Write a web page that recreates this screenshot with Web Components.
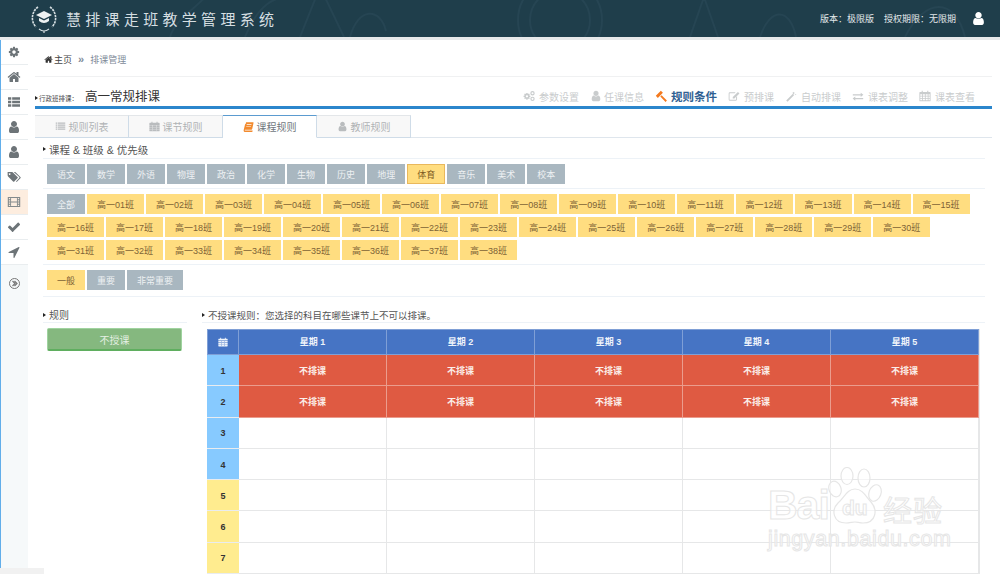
<!DOCTYPE html>
<html lang="zh">
<head>
<meta charset="utf-8">
<title>慧排课走班教学管理系统</title>
<style>
  html, body { margin: 0; height: 574px; overflow: hidden; background: #fff; }
  body { font-family: "Liberation Sans", "Noto Sans CJK SC", sans-serif; font-size: 9px; color: #555; position: relative; }
  .shell { display: flex; height: 534px; }
  .content { flex: 1; min-width: 0; }
  .rules { display: flex; }
</style>
</head>
<body>
<app-header></app-header>
<div class="shell">
  <side-nav></side-nav>
  <main-panel class="content">
    <bread-crumb></bread-crumb>
    <step-bar></step-bar>
    <tab-bar></tab-bar>
    <section-title>课程 &amp; 班级 &amp; 优先级</section-title>
    <chip-row id="subjects"></chip-row>
    <chip-row id="classes"></chip-row>
    <chip-row id="levels" last></chip-row>
    <div class="rules">
      <rule-panel style="width:144px;margin-right:7px">
        <span slot="title">规则</span>
        <rule-button>不授课</rule-button>
      </rule-panel>
      <rule-panel style="width:783px">
        <span slot="title" style="font-size:9.5px">不授课规则：您选择的科目在哪些课节上不可以排课。</span>
        <time-table></time-table>
      </rule-panel>
    </div>
  </main-panel>
</div>
<jingyan-mark></jingyan-mark>

<script>
const ICONS = {
  cog: '<path d="M1152 896q0-106-75-181t-181-75-181 75-75 181 75 181 181 75 181-75 75-181zm512-109v222q0 12-8 23t-20 13l-185 28q-19 54-39 91 35 50 107 138 10 12 10 25t-9 23q-27 37-99 108t-94 71q-12 0-26-9l-138-108q-44 23-91 38-16 136-29 186-7 28-36 28h-222q-14 0-24.5-8.5t-11.5-21.5l-28-184q-49-16-90-37l-141 107q-10 9-25 9-14 0-25-11-126-114-165-168-7-10-7-23 0-12 8-23 15-21 51-66.5t54-70.5q-27-50-41-99l-183-27q-13-2-21-12.5t-8-23.5v-222q0-12 8-23t19-13l186-28q14-46 39-92-40-57-107-138-10-12-10-24 0-10 9-23 26-36 98.5-107.5t94.5-71.5q13 0 26 10l138 107q44-23 91-38 16-136 29-186 7-28 36-28h222q14 0 24.5 8.5t11.5 21.5l28 184q49 16 90 37l142-107q9-9 24-9 13 0 25 10 129 119 165 170 7 8 7 22 0 12-8 23-15 21-51 66.5t-54 70.5q26 50 41 98l183 28q13 2 21 12.5t8 23.5z"/>',
  home: '<path d="M1472 992v480q0 26-19 45t-45 19h-384v-384h-256v384h-384q-26 0-45-19t-19-45v-480q0-1 .5-3t.5-3l575-474 575 474q1 2 1 6zm223-69l-62 74q-8 9-21 11h-3q-13 0-21-7l-692-577-692 577q-12 8-24 7-13-2-21-11l-62-74q-8-10-7-23.5t11-21.5l719-599q32-26 76-26t76 26l244 204v-195q0-14 9-23t23-9h192q14 0 23 9t9 23v408l219 182q10 8 11 21.5t-7 23.5z"/>',
  user: '<path d="M1536 1399q0 109-62.5 187t-150.5 78h-854q-88 0-150.5-78t-62.5-187q0-85 8.5-160.5t31.5-152 58.5-131 94-89 134.5-34.5q131 128 313 128t313-128q76 0 134.5 34.5t94 89 58.5 131 31.5 152 8.5 160.5zm-256-887q0 159-112.5 271.5t-271.5 112.5-271.5-112.5-112.5-271.5 112.5-271.5 271.5-112.5 271.5 112.5 112.5 271.5z"/>',
  check: '<path d="M1671 566q0 40-28 68l-724 724-136 136q-28 28-68 28t-68-28l-136-136-362-362q-28-28-28-68t28-68l136-136q28-28 68-28t68 28l294 295 656-657q28-28 68-28t68 28l136 136q28 28 28 68z"/>',
  send: '<path d="M1593 349l-640 1280q-17 35-57 35-5 0-15-2-22-5-35.5-22.5t-13.5-39.5v-576h-576q-22 0-39.5-13.5t-22.5-35.5 4-42 29-30l1280-640q13-7 29-7 27 0 45 19 15 14 18.5 34.5t-6.5 39.5z"/>',
  list: '<path d="M128 300h420v320H128zM660 300h1004v320H660zM128 736h420v320H128zM660 736h1004v320H660zM128 1172h420v320H128zM660 1172h1004v320H660z"/>',
  lines: '<path d="M120 230h260v220H120zM480 230h1190v220H480zM120 560h260v220H120zM480 560h1190v220H480zM120 890h260v220H120zM480 890h1190v220H480zM120 1220h260v220H120zM480 1220h1190v220H480z"/>',
  tags: '<path fill-rule="evenodd" d="M80 250h560q50 0 90 40l640 640q40 45 0 90l-470 470q-45 40-90 0L170 850q-90-70-90-170zM340 400a110 110 0 1 0 1 0z"/><path d="M860 250h150q50 0 90 40l640 640q40 45 0 90l-470 470q-40 30-90 10l-40-40 430-430q50-60 0-120z"/>',
  film: '<path fill-rule="evenodd" d="M100 260h1592v1272H100zM240 380v170h170V380zM240 660v170h170V660zM240 960v170h170V960zM240 1240v170h170v-170zM1382 380v170h170V380zM1382 660v170h170V660zM1382 960v170h170V960zM1382 1240v170h170v-170zM520 380v460h752V380zM520 950v460h752V950z"/>',
  calendar: '<path fill-rule="evenodd" d="M400 130h160v170h670V130h160v170h250q90 0 90 90v1200q0 90-90 90H150q-90 0-90-90V390q0-90 90-90h250zM190 620v240h270V620zM580 620v240h300V620zM1000 620v240h300V620zM1420 620v240h190V620zM190 960v240h270V960zM580 960v240h300V960zM1000 960v240h300V960zM1420 960v240h190V960zM190 1300v220h270v-220zM580 1300v220h300v-220zM1000 1300v220h300v-220zM1420 1300v220h190v-220z"/>',
  cogs: '<g transform="translate(0 350) scale(.66)"><path d="M1152 896q0-106-75-181t-181-75-181 75-75 181 75 181 181 75 181-75 75-181zm512-109v222q0 12-8 23t-20 13l-185 28q-19 54-39 91 35 50 107 138 10 12 10 25t-9 23q-27 37-99 108t-94 71q-12 0-26-9l-138-108q-44 23-91 38-16 136-29 186-7 28-36 28h-222q-14 0-24.5-8.5t-11.5-21.5l-28-184q-49-16-90-37l-141 107q-10 9-25 9-14 0-25-11-126-114-165-168-7-10-7-23 0-12 8-23 15-21 51-66.5t54-70.5q-27-50-41-99l-183-27q-13-2-21-12.5t-8-23.5v-222q0-12 8-23t19-13l186-28q14-46 39-92-40-57-107-138-10-12-10-24 0-10 9-23 26-36 98.5-107.5t94.5-71.5q13 0 26 10l138 107q44-23 91-38 16-136 29-186 7-28 36-28h222q14 0 24.5 8.5t11.5 21.5l28 184q49 16 90 37l142-107q9-9 24-9 13 0 25 10 129 119 165 170 7 8 7 22 0 12-8 23-15 21-51 66.5t-54 70.5q26 50 41 98l183 28q13 2 21 12.5t8 23.5z"/></g><circle cx="1420" cy="480" r="240" fill="none" stroke="currentColor" stroke-width="170"/><circle cx="1420" cy="1320" r="240" fill="none" stroke="currentColor" stroke-width="170"/>',
  gavel: '<path d="M109 809L809 109l282 282-700 700zM912 728l730 730-184 184-730-730z"/>',
  edit: '<path fill-rule="evenodd" d="M260 330h880l-140 140H280q-50 0-50 50v880q0 50 50 50h880q50 0 50-50v-360l140-140v520q0 170-170 170H280q-180 0-180-180V510q0-180 160-180z"/><path d="M1480 290l230 230-760 760H710v-240z"/>',
  magic: '<path d="M1180 560l200 200-1000 1000-200-200zM1280 250l60 120 130 30-100 90 20 130-110-70-120 70 20-130-90-90 130-30zM1600 560l40 90 90 30-90 30-40 90-40-90-90-30 90-30z"/>',
  exchange: '<path d="M120 620h1180V400l400 320-400 320V820H120zM1672 1180H492V960l-400 320 400 320v-220h1180z"/>',
  book: '<path d="M480 200h1180q80 0 60 100l-220 1000q-20 110-140 110H340q-70 0-70 70t90 80h1120q50 0 90-40l-30 180q-20 90-120 90H330q-230 0-230-250 0-80 30-170l180-720q40-250 170-250zM620 500l-30 110h780l30-110zM540 800l-30 110h780l30-110z" fill-rule="evenodd"/>',
  calendarFill: '<path fill-rule="evenodd" d="M400 130h160v170h670V130h160v170h250q90 0 90 90v1200q0 90-90 90H150q-90 0-90-90V390q0-90 90-90h250zM60 640v60h1670v-60zM60 1000v60h1670v-60zM60 1340v60h1670v-60zM560 700v900h60V700zM1170 700v900h60V700z"/>'
};

class UiIcon extends HTMLElement {
  connectedCallback() {
    const size = this.getAttribute('size') || 12;
    this.attachShadow({ mode: 'open' }).innerHTML = `
      <style>:host { display: inline-flex; flex: none; } svg { display: block; fill: currentColor; }</style>
      <svg width="${size}" height="${size}" viewBox="0 0 1792 1792" aria-hidden="true">${ICONS[this.getAttribute('name')]}</svg>`;
  }
}
customElements.define('ui-icon', UiIcon);

class AppHeader extends HTMLElement {
  constructor() {
    super();
    this.attachShadow({ mode: 'open' }).innerHTML = `
      <style>
        :host { display: flex; align-items: center; height: 37px; border-bottom: 3px solid #e7e9ea; background: #1f3e4b; color: #d6dfe2; position: relative; overflow: hidden; }
        .bg { position: absolute; inset: 0; pointer-events: none; }
        .logo { margin-left: 31px; display: block; position: relative; }
        .name { margin-left: 9px; font-size: 15px; letter-spacing: 4.3px; white-space: nowrap; position: relative; }
        .info { margin-left: auto; display: flex; align-items: center; font-size: 9px; color: #e2e8ea; position: relative; }
        .info span + span { margin-left: 10px; }
        ui-icon { margin: 0 14px 0 15px; color: #fff; }
      </style>
      <svg class="bg" width="1000" height="37" fill="none" stroke="#264553" stroke-width="2">
        <circle cx="560" cy="20" r="42"/><circle cx="560" cy="20" r="30"/>
        <path d="M690 37l14-40 14 40M760 37c10-30 30-30 36 0"/>
        <path d="M300 37l20-50 24 50M350 37c8-30 30-30 36-6M905 37c20-40 50-40 60 0"/>
        <path d="M170 37c6-20 30-30 44-50M245 37c14-34 30-40 44-40"/>
      </svg>
      <svg class="logo" width="26" height="32" viewBox="0 0 26 32">
        <path d="M7 4C1 8-1 18 5 24M19 4c6 4 8 14 2 20" fill="none" stroke="#d6dfe2" stroke-width="1.6" stroke-dasharray="2.4 .8"/>
        <path d="M8 26q5 4 10 0M13 28v2" fill="none" stroke="#d6dfe2" stroke-width="1.2"/>
        <path d="M13 8l8 4-8 4-8-4z" fill="#eef2f3"/>
        <path d="M8 15l5 2.6 5-2.6v3q-5 4-10 0z" fill="#eef2f3"/>
      </svg>
      <div class="name">慧排课走班教学管理系统</div>
      <div class="info"><span>版本：极限版</span><span>授权期限：无限期</span><ui-icon name="user" size="15"></ui-icon></div>`;
  }
}
customElements.define('app-header', AppHeader);

class SideNav extends HTMLElement {
  constructor() {
    super();
    const items = ['cog', 'home', 'list', 'user', 'user', 'tags', 'film', 'check', 'send'];
    const rows = items.map((n, i) =>
      `<div class="item${i === 6 ? ' on' : ''}"><ui-icon name="${n}" size="${n === 'cog' ? 12 : 14}"></ui-icon></div>`).join('');
    this.attachShadow({ mode: 'open' }).innerHTML = `
      <style>
        :host { display: block; flex: none; width: 27px; border-left: 1px solid #62aeea; background: #f6f9fa; color: #6d7478; position: relative; }
        .item { height: 24px; border-bottom: 1px solid #e9edef; background: #fff; display: flex; align-items: center; justify-content: center; padding-right: 1px; }
        .on { background: #fdeddf; color: #838a8c; }
        .toggle { width: 11px; height: 11px; box-sizing: border-box; border: 1px solid #777; border-radius: 50%; margin: 13px 0 0 8px; display: flex; align-items: center; justify-content: center; }
        .toggle svg { display: block; }
        .strip { position: absolute; left: -1px; bottom: 0; width: 44px; height: 6px; background: #f1f1f1; }
      </style>
      ${rows}
      <div class="toggle"><svg width="7" height="7" viewBox="0 0 7 7" fill="none" stroke="#777" stroke-width="1.2"><path d="M1.5 1l2.5 2.5-2.5 2.5M3.5 1L6 3.5 3.5 6"/></svg></div>
      <div class="strip"></div>`;
  }
}
customElements.define('side-nav', SideNav);

class MainPanel extends HTMLElement {
  constructor() {
    super();
    this.attachShadow({ mode: 'open' }).innerHTML = `
      <style>:host { display: block; padding: 0 8px 0 7px; background: #fff; }</style><slot></slot>`;
  }
}
customElements.define('main-panel', MainPanel);

class BreadCrumb extends HTMLElement {
  constructor() {
    super();
    this.attachShadow({ mode: 'open' }).innerHTML = `
      <style>
        :host { display: flex; align-items: center; height: 33px; border-bottom: 1px solid #f0f1f2; padding: 3px 0 0 9px; font-size: 9px; color: #444; }
        ui-icon { margin-right: 1px; color: #333; }
        .sep { margin: 0 6px 0 6px; color: #7f8b99; font-size: 11px; font-weight: 700; line-height: 9px; }
        .cur { color: #7f8b99; }
      </style>
      <ui-icon name="home" size="9"></ui-icon><span>主页</span><span class="sep">»</span><span class="cur">排课管理</span>`;
  }
}
customElements.define('bread-crumb', BreadCrumb);

class StepBar extends HTMLElement {
  constructor() {
    super();
    const steps = [['cogs', '参数设置'], ['user', '任课信息'], ['gavel', '规则条件'], ['edit', '预排课'], ['magic', '自动排课'], ['exchange', '课表调整'], ['calendar', '课表查看']];
    const html = steps.map(([icon, text], i) =>
      `<div class="step${i === 2 ? ' on' : ''}"><ui-icon name="${icon}" size="${i === 2 ? 13 : 12}"></ui-icon><span>${text}</span></div>`).join('');
    this.attachShadow({ mode: 'open' }).innerHTML = `
      <style>
        :host { display: flex; align-items: flex-end; height: 29px; border-bottom: 3px solid #2b86cc; white-space: nowrap; }
        .tag { display: flex; align-items: center; font-size: 6.5px; color: #444; width: 50px; flex: none; margin-bottom: 3px; }
        .tag i { border-left: 3px solid #222; border-top: 2px solid transparent; border-bottom: 2px solid transparent; margin-right: 1px; }
        h1 { margin: 0; font-weight: 400; font-size: 12.5px; line-height: 18px; color: #333; }
        .steps { margin-left: auto; display: flex; align-items: center; padding-right: 17px; color: #c9cccd; font-size: 10px; margin-bottom: 2px; }
        .step { display: flex; align-items: center; gap: 4px; margin-left: 11px; }
        .step:nth-child(2) { gap: 2px; }
        .on { color: #2f5f92; font-weight: 700; font-size: 11.5px; gap: 3px; }
        .on ui-icon { color: #f47a20; }
      </style>
      <div class="tag"><i></i>行政班排课：</div>
      <h1>高一常规排课</h1>
      <div class="steps">${html}</div>`;
  }
}
customElements.define('step-bar', StepBar);

class TabBar extends HTMLElement {
  constructor() {
    super();
    const tabs = [['lines', '规则列表'], ['calendarFill', '课节规则'], ['book', '课程规则'], ['user', '教师规则']];
    const html = tabs.map(([icon, text], i) =>
      `<div class="tab${i === 2 ? ' on' : ''}"><ui-icon name="${icon}" size="11"></ui-icon><span>${text}</span></div>`).join('');
    this.attachShadow({ mode: 'open' }).innerHTML = `
      <style>
        :host { display: flex; margin-top: 6px; height: 22px; border-bottom: 1px solid #dfe6ed; box-sizing: content-box; }
        .tab { width: 94px; box-sizing: border-box; height: 23px; display: flex; align-items: center; justify-content: center; gap: 3px; font-size: 10px; color: #b0b3b5; background: #f8f8f8; border: 1px solid #e3e6e9; border-left-width: 0; border-right-color: #cfdce8; border-bottom: 1px solid #cfdce8; }
        .tab:first-child { border-left-width: 1px; }
        .tab ui-icon { color: #b9bcbe; }
        .on { background: #fff; color: #70777d; border-top: 1px solid #5b9bd0; border-bottom-color: #fff; }
        .on ui-icon { color: #f28a2e; }
      </style>${html}`;
  }
}
customElements.define('tab-bar', TabBar);

class SectionTitle extends HTMLElement {
  constructor() {
    super();
    this.attachShadow({ mode: 'open' }).innerHTML = `
      <style>
        :host { display: flex; align-items: center; margin: 2px 7px 0 8px; height: 18px; border-bottom: 1px solid #edf2f7; font-size: 10.5px; color: #555; white-space: nowrap; }
        i { border-left: 3px solid #222; border-top: 2.5px solid transparent; border-bottom: 2.5px solid transparent; margin-right: 3px; }
      </style><i></i><slot></slot>`;
  }
}
customElements.define('section-title', SectionTitle);

class ChipButton extends HTMLElement {
  constructor() {
    super();
    this.attachShadow({ mode: 'open' }).innerHTML = `
      <style>
        :host { display: flex; align-items: center; height: 20px; box-sizing: border-box; padding: 0 10px; font-size: 9px; white-space: nowrap; background: #a9b7c0; color: #eef1f3; }
        :host([tone=warm]) { background: #ffdd80; color: #7d6236; }
        :host([selected]) { background: #ffdd80; color: #7d5a22; outline: 1px solid #e9b85c; outline-offset: -1px; }
      </style><slot></slot>`;
  }
}
customElements.define('chip-button', ChipButton);

class ChipRow extends HTMLElement {
  constructor() {
    super();
    this.attachShadow({ mode: 'open' }).innerHTML = `
      <style>
        :host { display: flex; flex-wrap: wrap; gap: 3px 2px; margin: 0 7px 0 8px; padding: 5px 0 4px 4px; border-bottom: 1px solid #edf2f7; }
        :host([last]) { padding-bottom: 6px; }
      </style><slot></slot>`;
  }
  set items(list) {
    list.forEach(([text, tone, selected]) => {
      const chip = document.createElement('chip-button');
      chip.textContent = text;
      if (tone) chip.setAttribute('tone', tone);
      if (selected) chip.setAttribute('selected', '');
      this.appendChild(chip);
    });
  }
}
customElements.define('chip-row', ChipRow);

class RulePanel extends HTMLElement {
  constructor() {
    super();
    this.attachShadow({ mode: 'open' }).innerHTML = `
      <style>
        :host { display: block; flex: none; margin-left: 8px; }
        .head { display: flex; align-items: center; height: 26px; box-sizing: border-box; padding-top: 10px; border-bottom: 1px solid #edf2f7; font-size: 10px; color: #555; white-space: nowrap; }
        i { border-left: 3px solid #222; border-top: 2.5px solid transparent; border-bottom: 2.5px solid transparent; margin-right: 3px; }
        .body { padding: 5px 5px 0 4px; }
      </style>
      <div class="head"><i></i><slot name="title"></slot></div>
      <div class="body"><slot></slot></div>`;
  }
}
customElements.define('rule-panel', RulePanel);

class RuleButton extends HTMLElement {
  constructor() {
    super();
    this.attachShadow({ mode: 'open' }).innerHTML = `
      <style>
        :host { display: flex; align-items: center; justify-content: center; height: 23px; box-sizing: border-box; border: 1px solid #9fd39f; border-bottom: 2px solid #5fae5f; border-radius: 2px; background: #85b87f; color: #e6f0e4; font-size: 10px; }
      </style><slot></slot>`;
  }
}
customElements.define('rule-button', RuleButton);

class TimeTable extends HTMLElement {
  constructor() {
    super();
    const days = [1, 2, 3, 4, 5];
    let cells = `<div class="h first"><ui-icon name="calendarFill" size="10"></ui-icon></div>`;
    cells += days.map(d => `<div class="h">星期 ${d}</div>`).join('');
    for (let row = 1; row <= 7; row++) {
      cells += `<div class="n ${row > 4 ? 'pm' : 'am'}">${row}</div>`;
      cells += days.map(() => row <= 2 ? `<div class="c off">不排课</div>` : `<div class="c"></div>`).join('');
    }
    this.attachShadow({ mode: 'open' }).innerHTML = `
      <style>
        :host { display: grid; grid-template-columns: 32px repeat(5, 1fr); grid-template-rows: 26px repeat(7, 31.3px); width: 773px; box-sizing: border-box; border-right: 1px solid #e6e7e8; margin: 1px 0 0 1px; font-size: 9px; }
        div { display: flex; align-items: center; justify-content: center; box-sizing: border-box; }
        .h { background: #4674c4; color: #eef3fa; font-weight: 700; border-right: 1px solid #7f9fd6; border-bottom: 1px solid #7f9fd6; border-top: 1px solid #7f9fd6; padding-bottom: 1px; }
        .first { border-left: 1px solid #7f9fd6; }
        .n { font-weight: 700; color: #333; border-bottom: 1px solid #e9ecef; padding-top: 1px; }
        .am { background: #87caff; }
        .pm { background: #ffec8f; }
        .c { border-right: 1px solid #e6e7e8; border-bottom: 1px solid #e6e7e8; padding-top: 1px; }
        .off { background: #df5a42; color: #fbeee9; font-weight: 700; border-color: #eb9c8d; }
      </style>${cells}`;
  }
}
customElements.define('time-table', TimeTable);

class JingyanMark extends HTMLElement {
  constructor() {
    super();
    this.attachShadow({ mode: 'open' }).innerHTML = `
      <style>
        :host { position: absolute; left: 768px; top: 467px; width: 180px; height: 86px; pointer-events: none; font-family: "Liberation Sans", sans-serif; }
        .row { display: flex; align-items: flex-end; height: 58px; }
        .t { color: rgba(255,255,255,.55); -webkit-text-stroke: 1px #e6e6e6; line-height: 1; }
        .bai { font-size: 41px; font-weight: 700; width: 60px; letter-spacing: -1px; margin-bottom: -1px; }
        svg { display: block; flex: none; }
        .jy { font-size: 29px; font-family: "Noto Sans CJK SC", sans-serif; margin-bottom: 1px; letter-spacing: 1px; white-space: nowrap; }
        .url { font-size: 21.5px; letter-spacing: .6px; margin-top: 4px; white-space: nowrap; }
        text { font: 700 21px "Liberation Sans", sans-serif; fill: rgba(255,255,255,.5); stroke: #e6e6e6; stroke-width: 1; }
      </style>
      <div class="row">
        <div class="t bai">Bai</div>
        <svg width="55" height="58" viewBox="0 0 55 58" fill="rgba(255,255,255,.55)" stroke="#e6e6e6" stroke-width="1.2">
          <ellipse cx="19" cy="9" rx="6" ry="8.5"/><ellipse cx="36" cy="11" rx="6" ry="9" />
          <ellipse cx="7" cy="22" rx="6" ry="8" transform="rotate(-20 7 22)"/><ellipse cx="47" cy="26" rx="6" ry="8.5" transform="rotate(20 47 26)"/>
          <path d="M27 22c8 0 11 8 16 13 7 8 5 21-8 21-3 0-6-1-8-1s-6 1-9 1C5 56 3 43 10 36c6-5 9-14 17-14z"/>
          <text x="14" y="48">du</text>
        </svg>
        <div class="t jy">经验</div>
      </div>
      <div class="t url">jingyan.baidu.com</div>`;
  }
}
customElements.define('jingyan-mark', JingyanMark);

document.getElementById('subjects').items =
  ['语文', '数学', '外语', '物理', '政治', '化学', '生物', '历史', '地理'].map(s => [s])
    .concat([['体育', 'warm', true]], ['音乐', '美术', '校本'].map(s => [s]));

const classes = [['全部']];
for (let i = 1; i <= 38; i++) classes.push([`高一${String(i).padStart(2, '0')}班`, 'warm']);
document.getElementById('classes').items = classes;

document.getElementById('levels').items = [['一般', 'warm'], ['重要'], ['非常重要']];
</script>
</body>
</html>
